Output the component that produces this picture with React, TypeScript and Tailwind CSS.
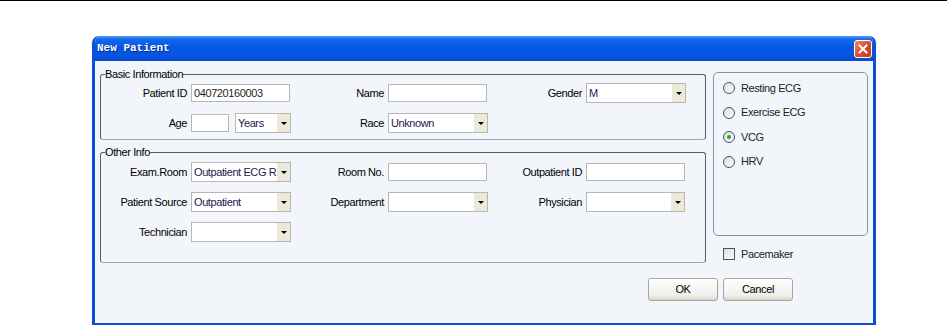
import React from "react";

const font = "font-['Liberation_Sans',Arial,sans-serif] text-[11px] tracking-[-0.4px]";

function Label({ children }: { children: React.ReactNode }) {
  return <span className="pr-[4px] text-right text-black whitespace-nowrap">{children}</span>;
}

function TextInput({ value = "", w = "w-[99px]" }: { value?: string; w?: string }) {
  return (
    <div className={`${w} flex h-[18px] items-center border border-[#b7b7b7] bg-white pl-[2px] text-[#1f1f1f]`}>
      {value}
    </div>
  );
}

function Select({ value = "", w = "w-[100px]" }: { value?: string; w?: string }) {
  return (
    <div className={`${w} flex h-[20px] items-stretch border border-[#b7b7b7] bg-white`}>
      <span className="flex flex-1 items-center overflow-hidden whitespace-nowrap pl-[2px] text-[#24164f]">{value}</span>
      <span className="flex w-[13px] items-center justify-center bg-[#ece9d8]">
        <span className="h-0 w-0 border-x-[3px] border-t-[3px] border-x-transparent border-t-black" />
      </span>
    </div>
  );
}

function Radio({ label, checked = false }: { label: string; checked?: boolean }) {
  return (
    <div className="flex h-[13px] items-center gap-[6px]">
      <span className="flex h-[12px] w-[12px] items-center justify-center rounded-full border border-[#3d5573] bg-[linear-gradient(135deg,#dedcd3,#ffffff)]">
        {checked && <span className="h-[4px] w-[4px] rounded-full bg-[#2aa52a]" />}
      </span>
      <span className="text-[#222]">{label}</span>
    </div>
  );
}

function GroupBox({ title, className = "", children }: { title: string; className?: string; children: React.ReactNode }) {
  return (
    <fieldset className={`rounded-[3px] border border-[#4e5e74] border-b-[#9ea8b3] ${className}`}>
      <legend className="ml-[4px] px-0 leading-[12px] text-black">{title}</legend>
      {children}
    </fieldset>
  );
}

const row = "grid h-[20px] grid-cols-[90px_103px_94px_104px_94px_1fr] items-center";

export default function App() {
  return (
    <div className="h-[325px] w-[947px] overflow-hidden border-t border-black bg-white">
      <div className="ml-[92px] mt-[35px] flex h-[290px] w-[784px] flex-col overflow-hidden rounded-t-[7px] border-x-[3px] border-b-[3px] border-[#0a4fd4] bg-[#f2f6fb]">
        {/* title bar */}
        <div className="-mx-[3px] flex h-[25px] shrink-0 items-center justify-between bg-[linear-gradient(to_bottom,#4b9cf8_0%,#1268ec_14%,#0558e6_45%,#0653e0_85%,#0a48c8_100%)] pl-[5px] pr-[4px]">
          <span className="font-['Liberation_Mono',monospace] text-[11px] font-bold tracking-[0px] text-white [text-shadow:1px_1px_0_#0a2c82]">
            New Patient
          </span>
          <span className="flex h-[18px] w-[18px] items-center justify-center rounded-[3px] border border-white bg-[linear-gradient(135deg,#ed8d6c,#d9482a_55%,#c63b1b)]">
            <svg width="10" height="10" viewBox="0 0 10 10">
              <path d="M1.5 1.5L8.5 8.5M8.5 1.5L1.5 8.5" stroke="white" strokeWidth="2" strokeLinecap="square" />
            </svg>
          </span>
        </div>

        {/* client area */}
        <div className={`flex flex-col pl-[5px] ${font}`}>
          <div className="flex gap-[7px]">
            <div className="flex w-[606px] flex-col">
              <GroupBox title="Basic Information" className="mt-[7px] pb-[6px] pt-[3px]">
                <div className="flex flex-col gap-[10px]">
                  <div className={row}>
                    <Label>Patient ID</Label>
                    <TextInput value="040720160003" />
                    <Label>Name</Label>
                    <TextInput />
                    <Label>Gender</Label>
                    <Select value="M" />
                  </div>
                  <div className={row}>
                    <Label>Age</Label>
                    <div className="flex items-center gap-[6px]">
                      <TextInput w="w-[38px]" />
                      <Select value="Years" w="w-[56px]" />
                    </div>
                    <Label>Race</Label>
                    <Select value="Unknown" />
                    <span />
                    <span />
                  </div>
                </div>
              </GroupBox>

              <GroupBox title="Other Info" className="mt-[6px] pb-[20px] pt-[4px]">
                <div className="flex flex-col gap-[10px]">
                  <div className={row}>
                    <Label>Exam.Room</Label>
                    <Select value="Outpatient ECG R" />
                    <Label>Room No.</Label>
                    <TextInput />
                    <Label>Outpatient ID</Label>
                    <TextInput />
                  </div>
                  <div className={row}>
                    <Label>Patient Source</Label>
                    <Select value="Outpatient" />
                    <Label>Department</Label>
                    <Select />
                    <Label>Physician</Label>
                    <Select w="w-[99px]" />
                  </div>
                  <div className={row}>
                    <Label>Technician</Label>
                    <Select />
                    <span />
                    <span />
                    <span />
                    <span />
                  </div>
                </div>
              </GroupBox>
            </div>

            <div className="flex w-[155px] flex-col">
              <div className="mt-[11px] flex h-[164px] flex-col gap-[11.5px] rounded-[5px] border border-[#8594a6] pl-[9px] pt-[8.5px]">
                <Radio label="Resting ECG" />
                <Radio label="Exercise ECG" />
                <Radio label="VCG" checked />
                <Radio label="HRV" />
              </div>
              <div className="mt-[10px] flex items-center gap-[6px] pl-[10px]">
                <span className="h-[12px] w-[12px] border border-[#3d5573] bg-[linear-gradient(135deg,#dedcd3,#ffffff)]" />
                <span className="text-[#222]">Pacemaker</span>
              </div>
            </div>
          </div>

          <div className="mt-[15px] flex justify-end gap-[5px] pr-[80px]">
            <button className="h-[23px] w-[70px] rounded-[3px] border border-[#a6a6a6] bg-[linear-gradient(to_bottom,#ffffff,#efeee9_80%,#d9d5cb)] text-black">
              OK
            </button>
            <button className="h-[23px] w-[70px] rounded-[3px] border border-[#a6a6a6] bg-[linear-gradient(to_bottom,#ffffff,#efeee9_80%,#d9d5cb)] text-black">
              Cancel
            </button>
          </div>
        </div>
      </div>
    </div>
  );
}
